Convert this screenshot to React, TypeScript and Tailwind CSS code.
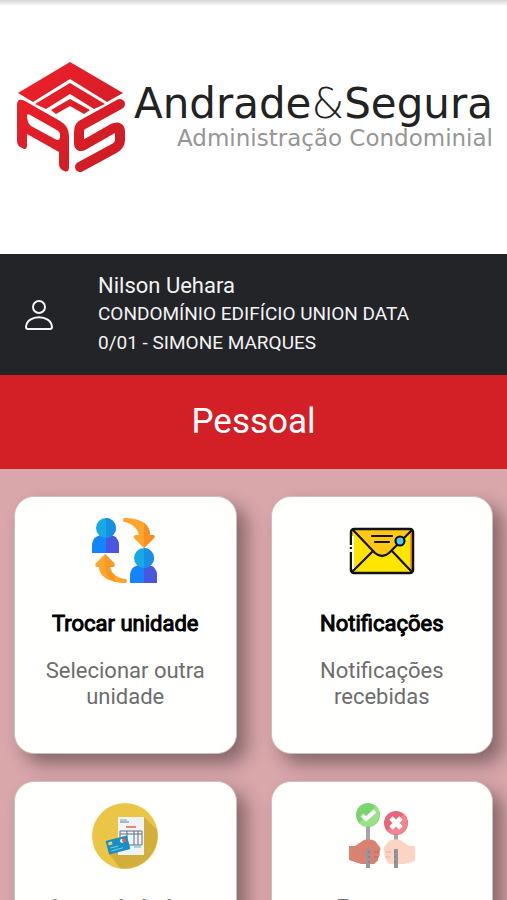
import type { ReactNode } from "react";

function LogoMark() {
  return (
    <svg viewBox="0 0 112 114" className="h-[114px] w-28 shrink-0" aria-hidden="true">
      <defs>
        <linearGradient id="mark" x1="0" y1="0" x2="112" y2="114" gradientUnits="userSpaceOnUse">
          <stop offset="0" stopColor="#f0202a" />
          <stop offset="1" stopColor="#c91c24" />
        </linearGradient>
      </defs>
      <g fill="url(#mark)">
        <path d="M55 1 L108 32 L92 41 L55 18 L18 41 L3 32 Z" />
        <path d="M55 22 L90 43 L79 48 L55 33 L31 48 L20 43 Z" />
        <path d="M55 38 L75 49 L69 53 L55 45 L41 53 L36 49 Z" />
      </g>
      <path
        fill="url(#mark)"
        fillRule="evenodd"
        d="M2 44 Q2 36 10 40 L45 60 Q54 65 54 75 V106 Q54 112 49 110 Q44 108 44 103 V91 L12 73 V84 Q12 90 7 87 Q2 85 2 80 Z M12 54 Q13 52 17 55 L40 68 Q46 71 45 75 Q45 81 40 78 L16 65 Q12 62 12 54 Z"
      />
      <path
        fill="none"
        stroke="url(#mark)"
        strokeWidth="10"
        strokeLinecap="round"
        strokeLinejoin="round"
        d="M105 43 L67 64 Q64 66 64 71 V82 Q64 87 69 84 L97 68 Q105 64 105 71 V79 Q105 84 100 87 L65 106"
      />
    </svg>
  );
}

function SwapIcon() {
  return (
    <svg viewBox="0 0 66 66" className="size-[66px]" aria-hidden="true">
      <defs>
        <g id="swap-person">
          <path d="M0 35V28C0 21 4 18 9 17h9c6 1 9 5 9 11v7z" fill="#1284ff" />
          <path d="M14 17h4c6 1 9 5 9 11v7H14z" fill="#4b55df" />
          <circle cx="14" cy="10" r="10" fill="#16a9e6" />
          <path d="M14 0a10 10 0 0 1 0 20z" fill="#168fe5" />
        </g>
      </defs>
      <use href="#swap-person" />
      <use href="#swap-person" x="38" y="30" />
      <path d="M32 0c15 0 26 5 26 17h3q3 1 1 3l-10 10-10-10q-1-3 2-3h3C46 11 40 5 32 4q-2-2 0-4z" fill="#ffa52c" />
      <path d="M52 5q6 5 6 12h3q3 1 1 3l-10 10z" fill="#fa8d22" />
      <path d="M34 65C17 65 7 58 7 49H5q-3-1-1-4l9-9 9 9q2 4-2 4h-2c1 7 7 11 16 12q2 1 0 4z" fill="#ffa52c" />
      <path d="M13 36l9 9q2 4-2 4h-2q1 5 5 8v7Q13 60 13 49z" fill="#fa9827" />
    </svg>
  );
}

function EnvelopeIcon() {
  return (
    <svg viewBox="-1 0 66 66" className="size-[66px]" aria-hidden="true">
      <rect x="2" y="11" width="62" height="43" rx="3" fill="#ffe500" />
      <path d="M60 11h3v43h-3z" fill="#ff9819" />
      <path d="M3 12h59L38 36q-6 5-12 0z" fill="#ffc815" />
      <rect x="1" y="11" width="62" height="44" rx="3" fill="none" stroke="#111" strokeWidth="2.5" />
      <path d="M3 12l22 23q7 6 14 0l23-23M3 53l20-20M61 53L42 33M22 18h20M25 24h14" fill="none" stroke="#111" strokeWidth="2.2" strokeLinecap="round" />
      <circle cx="50" cy="23" r="4.5" fill="#55c7ff" stroke="#111" strokeWidth="2.2" />
      <path d="M-1 27h5v2h-5zM-1 31h5v3h-5z" fill="#fff" />
      <path d="M3 18v33" stroke="#fff" strokeWidth="2" />
    </svg>
  );
}

function InvoiceIcon() {
  return (
    <svg viewBox="0 0 66 66" className="size-[66px]" aria-hidden="true">
      <circle cx="33" cy="33" r="33" fill="#ebc546" />
      <path d="M52 14l13 13A33 33 0 0 1 28 65L17 51z" fill="#d2ae3d" />
      <rect x="26" y="14" width="26" height="38" fill="#eef3f7" />
      <path d="M28 17h7M42 44h7" stroke="#55b8ca" />
      <path d="M28 19h9" stroke="#777" />
      <path d="M34 24h10" stroke="#ee846b" strokeWidth="2" />
      <path d="M28 28h22v14H28zM28 31h22M35 28v14M42 28v14M46 28v14" fill="none" stroke="#657080" />
      <g transform="rotate(-15 26 42)">
        <rect x="15" y="35" width="22" height="14" rx="1" fill="#168fc4" />
        <rect x="17" y="37" width="4" height="3" fill="#e7d56a" />
        <circle cx="31" cy="39" r="2" fill="#fff" />
        <circle cx="33" cy="39" r="2" fill="#e75b60" />
        <path d="M18 43h8M18 46h12" stroke="#7dcae4" />
      </g>
    </svg>
  );
}

function VoteIcon() {
  return (
    <svg viewBox="0 0 66 66" className="size-[66px]" aria-hidden="true">
      <path d="M19 22v43M47 30v35" stroke="#a5a5ae" strokeWidth="4" />
      <circle cx="19" cy="12" r="12" fill="#78d66d" />
      <path d="M27 3a12 12 0 0 1-17 17z" fill="#9be18a" />
      <path d="M13 12l4 4 9-8" fill="none" stroke="#fff" strokeWidth="4" />
      <circle cx="47" cy="20" r="12" fill="#e96578" />
      <path d="M55 11a12 12 0 0 1-17 17z" fill="#f48291" />
      <path d="M42 15l10 10M52 15L42 25" stroke="#fff" strokeWidth="5" />
      <path d="M0 43h6l9-6q6-2 11 1l4 5q3 3 0 6 2 3-1 5 1 4-2 5-1 3-5 2H12L0 57z" fill="#d98272" />
      <path d="M66 43h-6l-9-6q-6-2-11 1l-4 5q-3 3 0 6-2 3 1 5-1 4 2 5 1 3 5 2h12l12-4z" fill="#fdd3c4" />
      <path d="M25 49h6M25 54h5" stroke="#bd695e" />
      <path d="M36 49h6M36 54h5" stroke="#e6b3a7" />
      <path d="M19 46v19M47 46v19" stroke="#96949e" strokeWidth="4" />
      <path d="M20 48v14M46 48v14" stroke="#777681" strokeDasharray="2 3" />
    </svg>
  );
}

function PersonIcon() {
  return (
    <svg viewBox="0 0 28 30" className="h-[30px] w-7 shrink-0" fill="none" stroke="#f5f5f6" strokeWidth="2" aria-hidden="true">
      <circle cx="14" cy="7" r="6" />
      <path d="M3 29Q1 29 1 27C2 14 26 14 27 27Q27 29 25 29Z" strokeLinejoin="round" />
    </svg>
  );
}

function MenuCard({ icon, title, text }: { icon: ReactNode; title: string; text: string }) {
  return (
    <button type="button" className="flex h-[258px] min-w-0 flex-col items-center rounded-[20px] border border-[#cdbfbe] bg-[#fffffe] px-4 pt-[21px] text-center shadow-[10px_10px_18px_rgba(0,0,0,0.38)]">
      {icon}
      <span className="mt-6 text-[22px] leading-8 text-black [-webkit-text-stroke:1px_black]">{title}</span>
      <span className="mt-[18px] text-[22px] leading-[26px] text-[#6d6d6d]">{text}</span>
    </button>
  );
}

export default function App() {
  return (
    <div className="h-screen overflow-hidden bg-[#d9a6aa] font-[Roboto,sans-serif]">
      <header className="flex h-[254px] items-center justify-between bg-[linear-gradient(#d4d4d4,#fff_6px)] pr-[14px] pb-[18px] pl-[15px]">
        <LogoMark />
        <div className="flex flex-col items-end font-['DejaVu_Sans',sans-serif] whitespace-nowrap">
          <span className="text-[42px] leading-10 text-[#222]">Andrade<span className="font-extralight">&amp;</span>Segura</span>
          <span className="text-[23px] leading-7 text-[#969696]">Administração Condominial</span>
        </div>
      </header>
      <section className="flex h-[121px] items-center gap-[45px] bg-[#232428] pl-[25px] text-[#f3f3f4]">
        <PersonIcon />
        <div>
          <p className="text-[22px] leading-7">Nilson Uehara</p>
          <p className="text-[19px] leading-7">CONDOMÍNIO EDIFÍCIO UNION DATA</p>
          <p className="text-[19px] leading-[30px]">0/01 - SIMONE MARQUES</p>
        </div>
      </section>
      <h1 className="flex h-[94px] items-center justify-center bg-[#d31f26] text-[35px] text-white">Pessoal</h1>
      <main className="grid grid-cols-2 gap-x-[34px] gap-y-[27px] px-[14px] pt-[27px]">
        <MenuCard icon={<SwapIcon />} title="Trocar unidade" text="Selecionar outra unidade" />
        <MenuCard icon={<EnvelopeIcon />} title="Notificações" text="Notificações recebidas" />
        <MenuCard icon={<InvoiceIcon />} title="Conta do boleto" text="Consultar boletos" />
        <MenuCard icon={<VoteIcon />} title="Enquetes" text="Enquetes do condomínio" />
      </main>
    </div>
  );
}
